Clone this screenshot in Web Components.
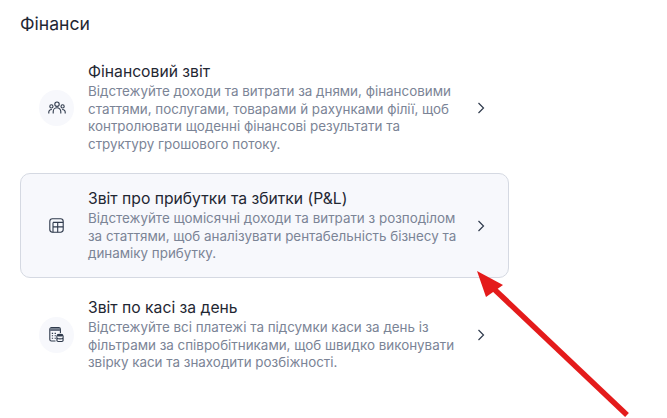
<!DOCTYPE html>
<html lang="uk">
<head>
<meta charset="utf-8">
<title>Фінанси</title>
<style>
html, body { margin: 0; background: #fff; }
body { width: 667px; height: 418px; overflow: hidden; position: relative; font-family: Inter, "Liberation Sans", sans-serif; }
</style>
</head>
<body>
<template id="section-tpl">
  <style>
    :host { display: block; padding: 14px 158px 0 20px; }
    h2 { margin: 0 0 12px; font-size: 17.6px; line-height: 20px; font-weight: 400; color: #1f2733; }
    .list { display: flex; flex-direction: column; gap: 4px; }
  </style>
  <h2><slot name="title"></slot></h2>
  <div class="list"><slot></slot></div>
</template>

<template id="card-tpl">
  <style>
    :host { display: flex; align-items: center; box-sizing: border-box; padding: 15px 18px 14px 18px; border: 1px solid transparent; border-radius: 10px; }
    :host([active]) { background: #f7f8fc; border: 1px solid #d5d9e2; }
    .icon { flex: none; width: 35px; height: 36px; border-radius: 50%; display: flex; align-items: center; justify-content: center; background: #f7f8fc; margin-right: 14px; }
    .body { flex: none; width: 372px; }
    .title { font-size: 15.7px; line-height: 20px; color: #1f2733; }
    .desc { font-size: 13.4px; line-height: 17.7px; color: #7b8496; margin-top: 1px; }
    .chev { flex: none; margin-left: 17px; display: block; }
  </style>
  <div class="icon"><slot name="icon"></slot></div>
  <div class="body">
    <div class="title"><slot name="title"></slot></div>
    <div class="desc"><slot></slot></div>
  </div>
  <svg class="chev" width="10" height="12" viewBox="0 0 10 12" fill="none" stroke="#2f3a4c" stroke-width="1.2"><path d="M1.5 1l5 5-5 5"/></svg>
</template>

<fin-section>
  <span slot="title">Фінанси</span>
  <fin-card>
    <svg slot="icon" width="18" height="14" viewBox="0 0 18 14" fill="none" stroke="#2f3a4c" stroke-width="1.1"><circle cx="9" cy="3.2" r="2.2"/><circle cx="3.4" cy="5.4" r="1.6"/><circle cx="14.6" cy="5.4" r="1.6"/><path d="M5.2 12.5V10.5a3.8 3.8 0 0 1 7.6 0v2"/><path d="M.8 12.5v-1.4a2.6 2.6 0 0 1 3-2.5M17.2 12.5v-1.4a2.6 2.6 0 0 0-3-2.5"/></svg>
    <span slot="title">Фінансовий звіт</span>
    Відстежуйте доходи та витрати за днями, фінансовими статтями, послугами, товарами й рахунками філії, щоб контролювати щоденні фінансові результати та структуру грошового потоку.
  </fin-card>
  <fin-card active>
    <svg slot="icon" width="15" height="15" viewBox="0 0 15 15" fill="none" stroke="#2f3a4c" stroke-width="1.1"><rect x=".8" y=".8" width="13.4" height="13.4" rx="2.6"/><path d="M4 4.4h10.2M4 8.9h10.2M4 4.4v9.8M8.7 4.4v9.8"/></svg>
    <span slot="title">Звіт про прибутки та збитки (P&amp;L)</span>
    Відстежуйте щомісячні доходи та витрати з розподілом за статтями, щоб аналізувати рентабельність бізнесу та динаміку прибутку.
  </fin-card>
  <fin-card>
    <svg slot="icon" width="15" height="15" viewBox="0 0 15 15" fill="none" stroke="#2f3a4c" stroke-width="1.1"><path d="M6.5 14H2.4A1.6 1.6 0 0 1 .8 12.4V2.2A1.6 1.6 0 0 1 2.4.6h7.4a1.6 1.6 0 0 1 1.6 1.6V6"/><path d="M1 1.2h10.2v2.8H1z" fill="#6a7383" stroke="none"/><path d="M2.8 6.4h1.3M5.6 6.4h1.3M2.8 8.8h1.3M5.6 8.8h1.3M2.8 11.2h1.3M5.6 11.2h1.3"/><ellipse cx="11" cy="8.2" rx="3.2" ry="1.4" fill="#2f3a4c" stroke="none"/><path d="M7.9 8.4v5c0 .7 1.4 1.2 3.1 1.2s3.1-.5 3.1-1.2v-5M7.9 10.8c0 .7 1.4 1.1 3.1 1.1s3.1-.4 3.1-1.1"/></svg>
    <span slot="title">Звіт по касі за день</span>
    Відстежуйте всі платежі та підсумки каси за день із фільтрами за співробітниками, щоб швидко виконувати звірку каси та знаходити розбіжності.
  </fin-card>
</fin-section>

<red-arrow></red-arrow>

<script>
class FinSection extends HTMLElement {
  constructor() {
    super();
    this.root = this.attachShadow({ mode: 'open' });
    this.root.appendChild(document.getElementById('section-tpl').content.cloneNode(true));
  }
}
customElements.define('fin-section', FinSection);

class FinCard extends HTMLElement {
  constructor() {
    super();
    this.root = this.attachShadow({ mode: 'open' });
    this.root.appendChild(document.getElementById('card-tpl').content.cloneNode(true));
  }
}
customElements.define('fin-card', FinCard);

// The annotation lies over the page, so it is the one absolute element
class RedArrow extends HTMLElement {
  constructor() {
    super();
    this.root = this.attachShadow({ mode: 'open' });
    this.root.innerHTML = `
      <style>:host { position: absolute; left: 0; top: 0; width: 667px; height: 418px; pointer-events: none; }</style>
      <svg width="667" height="418" viewBox="0 0 667 418">
        <path d="M494 289L627 415" stroke="#e41b1b" stroke-width="5.5" fill="none"/>
        <path d="M477 271L503 285L486 297Z" fill="#e41b1b"/>
      </svg>`;
  }
}
customElements.define('red-arrow', RedArrow);
</script>
</body>
</html>
